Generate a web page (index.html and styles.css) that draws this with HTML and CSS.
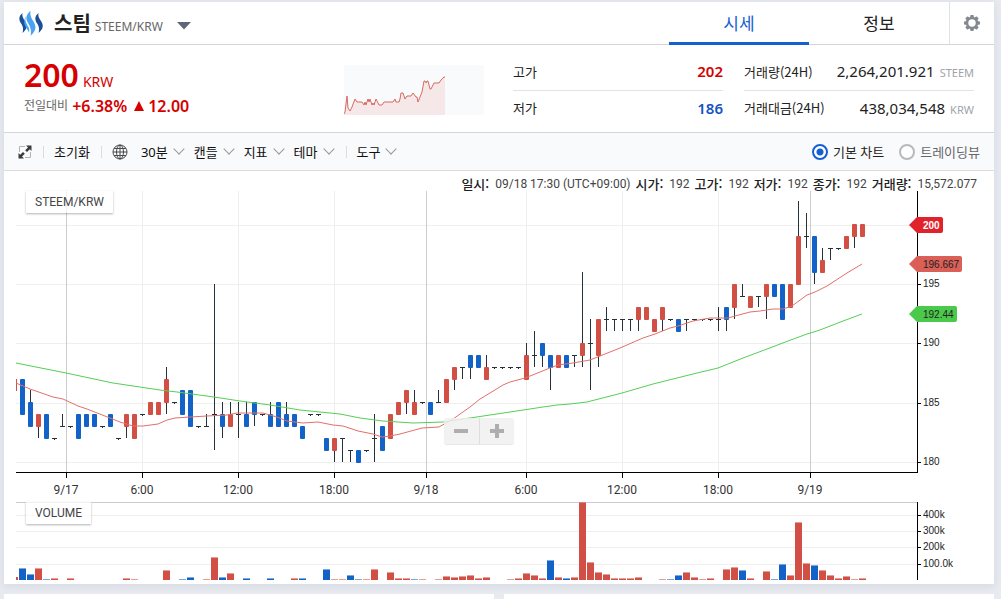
FILE: index.html
```
<!DOCTYPE html>
<html lang="ko">
<head>
<meta charset="utf-8">
<title>스팀 STEEM/KRW</title>
<link rel="stylesheet" href="styles.css">
</head>
<body>
<main class="card">
  <header class="head">
    <button class="coin" type="button">
      <svg class="coin-logo" width="26" height="26" viewBox="0 0 26 26" aria-hidden="true">
        <path fill="#1a5099" d="M4.500 3C.8 6 .6 9.500 2.800 13C4.800 16 5.800 18.500 4.500 23C9.300 19 9.800 15.500 7.300 11.500C4.800 8 3.800 6 4.500 3Z"/>
        <path fill="#4ba2f2" d="M12.500 1C8 4.500 7.200 8.500 10 13C12.500 17 13.800 20.500 12.500 25.800C18.200 21 18.500 16.500 15.800 12C12.800 7.500 11.800 5 12.500 1Z"/>
        <path fill="#4ba2f2" d="M8.300 6C6.500 9.500 7.500 12.500 9.500 15.500C11.300 18 11.500 20 11 22.500C9 18 6.500 16 6.300 12.500C6.200 9.500 6.800 7.500 8.300 6Z"/>
        <path fill="#1a5099" d="M20.500 3C16.800 6 16.600 9.500 18.800 13C20.800 16 21.800 18.500 20.500 23C25.300 19 25.800 15.500 23.300 11.500C20.800 8 19.800 6 20.500 3Z"/>
      </svg>
      <span class="coin-name">스팀</span>
      <span class="coin-pair">STEEM/KRW</span>
      <svg class="coin-caret" width="14" height="8" viewBox="0 0 14 8" aria-hidden="true"><path fill="#5f6777" d="M0 0H14L7 7.500Z"/></svg>
    </button>
    <nav class="tabs">
      <a class="tab tab-on" href="#price">시세</a>
      <a class="tab" href="#info">정보</a>
    </nav>
    <button class="settings" type="button" aria-label="설정">
      <svg width="18" height="18" viewBox="0 0 18 18" aria-hidden="true">
        <g fill="#84888f"><rect x="7.200" y="1" width="3.600" height="16" rx="1"/><rect x="7.200" y="1" width="3.600" height="16" rx="1" transform="rotate(45 9 9)"/><rect x="7.200" y="1" width="3.600" height="16" rx="1" transform="rotate(90 9 9)"/><rect x="7.200" y="1" width="3.600" height="16" rx="1" transform="rotate(135 9 9)"/><circle cx="9" cy="9" r="6.200"/></g>
        <circle cx="9" cy="9" r="3.700" fill="#fff"/>
      </svg>
    </button>
  </header>

  <section class="summary">
    <div class="price">
      <div class="price-now"><strong class="price-value">200</strong><span class="price-unit">KRW</span></div>
      <div class="price-change"><span class="price-label">전일대비</span><strong>+6.38%</strong><svg class="price-arrow" width="10" height="10" viewBox="0 0 10 10" aria-hidden="true"><path fill="#d60000" d="M5 0L10 10H0Z"/></svg><strong>12.00</strong></div>
    </div>
    <svg class="mini" viewBox="0 0 140 50" aria-hidden="true">
      <path id="mini-area" fill="#f6e8e8"/>
      <path id="mini-line" fill="none" stroke="#d86a63"/>
    </svg>
    <dl class="stats stats-range">
      <div class="stat"><dt>고가</dt><dd class="up">202</dd></div>
      <div class="stat"><dt>저가</dt><dd class="down">186</dd></div>
    </dl>
    <dl class="stats stats-volume">
      <div class="stat"><dt>거래량(24H)</dt><dd>2,264,201.921<small>STEEM</small></dd></div>
      <div class="stat"><dt>거래대금(24H)</dt><dd>438,034,548<small>KRW</small></dd></div>
    </dl>
  </section>

  <section class="toolbar">
    <button class="tool" type="button" aria-label="전체화면">
      <svg width="14" height="14" viewBox="0 0 14 14" aria-hidden="true"><path fill="none" stroke="#b4b4b4" d="M7 1.500H1.500V7M7 12.500H12.500V7"/><path fill="#3a3a3a" d="M13.500 .5V6L11.800 4.300L9 7.100L7.200 5.300L10 2.500L8 .5ZM.5 13.500V8L2.200 9.700L5 6.900L6.800 8.700L4 11.500L6 13.500Z"/></svg>
    </button>
    <i class="bar"></i>
    <button class="tool" type="button">초기화</button>
    <i class="bar"></i>
    <button class="tool globe" type="button" aria-label="시간대">
      <svg width="16" height="16" viewBox="0 0 16 16" fill="none" stroke="#4a4a4a" aria-hidden="true"><circle cx="8" cy="8" r="7"/><ellipse cx="8" cy="8" rx="3.500" ry="7"/><path d="M8 1V15M1 8H15M2 4.500H14M2 11.500H14"/></svg>
    </button>
    <div class="menus">
      <button class="tool menu" type="button">30분</button>
      <button class="tool menu" type="button">캔들</button>
      <button class="tool menu" type="button">지표</button>
      <button class="tool menu" type="button">테마</button>
    </div>
    <i class="bar"></i>
    <button class="tool menu" type="button">도구</button>
    <div class="modes">
      <label class="mode mode-on"><input type="radio" name="mode" checked>기본 차트</label>
      <label class="mode"><input type="radio" name="mode">트레이딩뷰</label>
    </div>
  </section>

  <section class="chart">
    <div class="legend">
      <b>일시:</b><span>09/18 17:30 (UTC+09:00)</span>
      <b>시가:</b><span>192</span>
      <b>고가:</b><span>192</span>
      <b>저가:</b><span>192</span>
      <b>종가:</b><span>192</span>
      <b>거래량:</b><span>15,572.077</span>
    </div>
    <div class="panel">
      <svg class="plot" id="price-plot" viewBox="4 191 990 311"></svg>
      <span class="panel-name">STEEM/KRW</span>
      <div class="zoom">
        <button type="button" aria-label="축소"><svg width="14" height="14" viewBox="0 0 14 14"><path fill="#aeaeae" d="M0 5H14V9H0Z"/></svg></button>
        <button type="button" aria-label="확대"><svg width="14" height="14" viewBox="0 0 14 14"><path fill="#aeaeae" d="M0 5H5V0H9V5H14V9H9V14H5V9H0Z"/></svg></button>
      </div>
    </div>
    <div class="panel">
      <svg class="plot" id="volume-plot" viewBox="4 502 990 82"></svg>
      <span class="panel-name">VOLUME</span>
    </div>
  </section>
</main>
<div class="next">
  <div class="next-card"></div>
  <div class="next-card"></div>
</div>
<script src="chart.js"></script>
</body>
</html>
```
FILE: styles.css
```
* { box-sizing: border-box; }
html { height: 100%; overflow: hidden; }
body {
  margin: 0;
  height: 100%;
  padding: 2px 7px 0 4px;
  overflow: hidden;
  display: flex;
  flex-direction: column;
  gap: 10px;
  background: #e7eaef;
  color: #222;
  font-family: "Noto Sans", "Noto Sans CJK KR", sans-serif;
  font-size: 13px;
}
button { margin: 0; padding: 0; border: 0; background: none; font: inherit; color: inherit; cursor: pointer; }
svg { display: block; flex: none; }
dl, dd { margin: 0; }

.card { flex: none; background: #fff; box-shadow: 0 2px 8px rgba(60, 80, 110, .1); }

.head { display: flex; height: 43px; border-bottom: 1px solid #d3d5db; }
.coin { display: flex; align-items: center; margin-right: auto; padding-left: 14px; }
.coin-name { margin-left: 10px; font: bold 20px/30px "Noto Sans CJK KR", sans-serif; }
.coin-pair { margin: 6px 14px 0 4px; font-size: 12px; color: #666; }
.coin-caret { margin-top: 6px; }
.tabs { display: flex; }
.tab { width: 140px; height: 43px; text-align: center; font: 400 17px/42px "Noto Sans CJK KR", sans-serif; color: #222; text-decoration: none; }
.tab-on { color: #1560d0; border-bottom: 3px solid #1560d0; }
.settings { display: flex; align-items: center; justify-content: center; width: 45px; border-left: 1px solid #dfe1e6; }

.summary {
  display: grid;
  grid-template-columns: 1fr 140px 239px 251px;
  align-items: start;
  height: 88px;
  padding: 0 20px;
  border-bottom: 1px solid #d3d5db;
}
.price { color: #d60000; }
.price-now { display: flex; align-items: baseline; gap: 4px; line-height: 40px; height: 50px; padding-top: 10px; }
.price-value { font-size: 32px; font-weight: 600; }
.price-unit { font-size: 14px; }
.price-change { display: flex; align-items: center; gap: 4px; line-height: 22px; font-size: 16px; }
.price-change strong { font-weight: 600; }
.price-label { font-size: 12px; color: #666; }
.price-arrow { margin-left: 3px; }
.mini { width: 140px; height: 50px; margin-top: 20px; background: #f9fafc; }
.stats { margin-top: 9px; }
.stats-range { margin-left: 29px; }
.stats-volume { margin-left: 21px; }
.stat { display: flex; align-items: center; justify-content: space-between; height: 36px; padding-bottom: 2px; }
.stat + .stat { border-top: 1px solid #e1e3e9; }
.stat dt { font-family: "Noto Sans CJK KR", sans-serif; font-size: 13px; }
.stat dd { font-size: 15px; }
.stat small { margin-left: 5px; font-size: 11px; color: #a0a3a9; }
.stat .up { color: #d60000; font-weight: 600; }
.stat .down { color: #1353c0; font-weight: 600; }

.toolbar { display: flex; align-items: center; height: 38px; padding: 0 14px; background: #f9fafc; border-bottom: 1px solid #ddd; }
.tool { display: flex; align-items: center; color: #111; }
.bar { width: 1px; height: 12px; margin: 0 10px 0 11px; background: #d9dbe0; }
.globe { margin-right: 13px; }
.menus { display: flex; gap: 9px; }
.menu { gap: 6px; }
.menu::after { content: ""; width: 7px; height: 7px; margin: 0 2px 5px 1px; border: solid #999; border-width: 0 1px 1px 0; transform: rotate(45deg); }
.modes { display: flex; gap: 15px; margin-left: auto; }
.mode { display: flex; align-items: center; gap: 5px; color: #666; line-height: 16px; }
.mode-on { color: #222; }
.mode input { appearance: none; width: 16px; height: 16px; margin: 0; border: 2px solid #b9b9b9; border-radius: 50%; background: #fff; }
.mode input:checked { border-color: #1560d0; background: radial-gradient(circle, #1560d0 3px, #fff 4px); }

.legend { display: flex; justify-content: flex-end; height: 20px; padding: 4px 17px 0 0; line-height: 18px; font-size: 12px; font-family: Roboto, sans-serif; color: #444; white-space: nowrap; }
.legend b { margin: 0 6px 0 5px; font: 500 13px/18px "Noto Sans CJK KR", sans-serif; color: #222; }
.panel { position: relative; }
.plot { width: 100%; height: auto; }
.panel-name { position: absolute; top: 0; left: 22px; padding: 0 9px; font: 12px/22px Roboto, sans-serif; color: #444; background: rgba(255, 255, 255, .7); box-shadow: 0 1px 2px rgba(0, 0, 0, .3); }
.zoom { position: absolute; top: 73%; left: 440px; display: flex; width: 70px; height: 26px; border-radius: 3px; background: rgba(240, 240, 240, .85); box-shadow: 0 1px 1px rgba(0, 0, 0, .1); }
.zoom button { flex: 1; display: flex; align-items: center; justify-content: center; }
.zoom button + button { border-left: 1px solid #ddd; }

.grid { fill: #efefef; }
.grid-day { fill: #ccc; }
.axis { fill: #000; }
.wick { fill: #263238; }
.rise { fill: #d24f45; }
.fall { fill: #1262c8; }
.faded { opacity: .55; }
.ma-fast { fill: none; stroke: #e0716a; }
.ma-slow { fill: none; stroke: #55cf55; }
.x-text { font: 12px Roboto, sans-serif; fill: #333; text-anchor: middle; }
.y-text { font: 10px "Liberation Sans", sans-serif; fill: #222; }
.tag-now { fill: #e2222b; }
.tag-fast { fill: #d95f57; }
.tag-slow { fill: #4bc94b; }
.y-text-now { fill: #fff; font-weight: bold; }

.next { display: flex; flex: 1; gap: 10px; }
.next-card { flex: 1; background: #fff; }
```
FILE: chart.js
```
const NS = "http://www.w3.org/2000/svg";
const pricePlot = document.getElementById("price-plot");
const volumePlot = document.getElementById("volume-plot");

function add(parent, name, attrs, text) {
  const el = document.createElementNS(NS, name);
  for (const key in attrs) el.setAttribute(key, attrs[key]);
  if (text) el.textContent = text;
  parent.appendChild(el);
  return el;
}
function box(parent, cls, x, y, width, height, rx = 0) {
  add(parent, "rect", { class: cls, x, y, width, height, rx });
}

const left = 16, right = 917, priceBase = 472, volumeBase = 580;
const candleX = i => 22 + 8 * i;
const priceY = p => Math.round(461.6 - (p - 180) * 11.86);

// Each candle: kind (R rise, B fall, D flat), body top, body bottom, high, low.
const candles = `B187,184 B185,183,186 R184,183,,182 B184,182 D182 D183,,184 D183 B184,182 B184,183 B184,183
D183 B184,183 D182 R184,183,,182 R184,182 D184 R185,184 R185,184 R187,185,188,184 D185
B186,184 B186,183 D183 D183,,184 D184,,195,181 B184,183,185,182 R184,183,185 D184,,185,182 B184,183,185 B185,184,,183
D184 B184,183,185 B185,183 B184,183,185 B184,183 B183,182 D184 D184 B182,181 R182,181,,180
D182,,,180 D181,,,180 B181,180 D181 D182,,184,180 B183,181 R184,182 R185,184 R186,185,,184 R185,184,186
D185 B185,184 D185,,186 R187,185 R188,187,,186 D188,,,187 B189,188,,187 B189,188 R188,187,189 D188
D188 D188 D188 R189,187,190 D189,,191,188 B190,189,,188 B189,188,,186 R189,188 B189,188 D189,,,188
R190,189,196,188 D190,,192,186 R192,189,,188 D192,,193,191 D192,,,191 D192,,,191 D192,,,191 R193,192,,191 R193,192 R192,191
R193,192,,191 D192 B192,191 D192,,,191 D192 D192 D192 D192,,193,191 B193,192,,191 R195,193,,192
D194,,195 R194,193 D194,,,193 R195,194,,192 B195,194 B195,192 R195,193 R199,195,202 D199,,201,198 B199,196,,195
R197,196,198 D198,,,197 D198 R199,198 R200,199,,198 R200,199`.split(/\s+/);

// Volume bars: candle index, kind, height.
const volumes = `0B12 1B6 2R12 3B1 4R2 6R2 13R2 14R1 18R10 20B1 21B3 23R1 24R23 25B3 26R7 28B2 31B2 34R2 35B2
38B11 39R1 40R1 41B5 42B1 43R1 44R11 46R8 47R2 48R2 49B1 50R1 52R1 53R4 54R3 55R4 56R5 57R2 58R3
61R1 62R2 63R7 64R5 65R2 66B20 67R3 68B2 69R3 70R78 71R18 72R8 73R6 74R2 75R2 76R2 77R3 80R1 81B1 82B5
83R8 84R3 85R1 86R2 88R11 89R13 90B10 91R2 93R9 94B1 95B16 96R5 97R58 98R17 99B15 100R10 101R5 102R2 103R4 104R1 105R2`.split(/\s+/);

const fast = "16,383 30,389 53,397 63,399 78,406 87,409 110,418 120,422 133,426 143,426 158,424 167,420 175,418 190,417 207,416 227,415 237,413 263,413 277,417 287,421 303,423 318,422 333,425 343,426 358,431 373,434 382,437 390,436 400,434 422,428 439,427 453,419 470,407 480,399 490,393 503,385 510,382 525,378 550,368 558,365 573,363 590,360 620,348 643,338 655,334 670,328 678,326 693,321 710,318 728,318 735,316 750,312 760,311 773,309 783,309 792,306 807,295 815,292 827,286 847,273 862,264";
const slow = "16,363 66,373 113,383 160,390 177,392 214,397 240,401 270,405 300,410 340,414 360,418 383,421 413,423 443,422 470,418 490,415 510,412 543,407 557,405 570,404 587,402 622,393 653,384 693,374 718,368 743,358 767,349 788,341 807,334 820,330 843,321 862,314";

for (const [y, label] of [[225, ""], [284, "195"], [343, "190"], [403, "185"], [462, "180"]]) {
  box(pricePlot, "grid", left, y, right - left, 1);
  if (label) {
    box(pricePlot, "axis", right, y, 4, 1);
    add(pricePlot, "text", { class: "y-text", x: 923, y: y + 3 }, label);
  }
}
for (const [x, label, day] of [[66, "9/17", 1], [142, "6:00"], [238, "12:00"], [334, "18:00"], [426, "9/18", 1], [526, "6:00"], [622, "12:00"], [718, "18:00"], [810, "9/19", 1]]) {
  box(pricePlot, day ? "grid-day" : "grid", x, 191, 1, priceBase - 191);
  box(pricePlot, "axis", x, priceBase, 1, 6);
  add(pricePlot, "text", { class: "x-text", x, y: 494 }, label);
}
box(pricePlot, "axis", left, priceBase, right - left + 1, 1);
box(pricePlot, "axis", right, 191, 1, priceBase - 191);

box(pricePlot, "rise", left, 379, 1, 12);
candles.forEach((item, i) => {
  const [top, bottom, high, low] = item.slice(1).split(",").map(Number);
  const end = bottom || top;
  const x = candleX(i);
  const y1 = priceY(high || top), y2 = priceY(low || end);
  box(pricePlot, "wick", x, y1, 1, Math.max(2, y2 - y1));
  if (item[0] === "D") box(pricePlot, "wick", x - 2, priceY(top), 5, 1);
  else box(pricePlot, item[0] === "R" ? "rise" : "fall", x - 2, priceY(top), 5, priceY(end) - priceY(top) + 1, 1);
});
add(pricePlot, "polyline", { class: "ma-slow", points: slow });
add(pricePlot, "polyline", { class: "ma-fast", points: fast });

for (const [y, end, label, kind] of [[225, 943, "200", "now"], [264, 962, "196.667", "fast"], [314, 957, "192.44", "slow"]]) {
  add(pricePlot, "path", { class: "tag-" + kind, d: `M909 ${y}L917 ${y - 8}H${end - 2}Q${end} ${y - 8} ${end} ${y - 6}V${y + 6}Q${end} ${y + 8} ${end - 2} ${y + 8}H917Z` });
  add(pricePlot, "text", { class: "y-text y-text-" + kind, x: 923, y: y + 4 }, label);
}

for (const [y, label] of [[515, "400k"], [531, "300k"], [547, "200k"], [564, "100.0k"]]) {
  box(volumePlot, "grid", left, y, right - left, 1);
  box(volumePlot, "axis", right, y, 4, 1);
  add(volumePlot, "text", { class: "y-text", x: 923, y: y + 3 }, label);
}
box(volumePlot, "grid-day", left, 502, right - left, 1);
box(volumePlot, "axis", right, 502, 1, volumeBase - 502);
box(volumePlot, "rise", left, volumeBase - 3, 2, 3);
for (const item of volumes) {
  const [, i, kind, h] = item.match(/(\d+)([RB])(\d+)/);
  const cls = kind === "R" ? "rise" : "fall";
  const x = candleX(+i) - 3, y = volumeBase - h;
  box(volumePlot, cls + " faded", x, y, 7, 1);
  box(volumePlot, cls, x, y + 1, 7, h - 1);
}

const mini = [[0,49],[1,47],[3,31],[4,43],[6,46],[8,42],[11,34],[13,37],[18,37],[20,40],[21,37],[22,40],[24,34],[25,37],[26,34],[28,40],[29,38],[30,40],[32,34],[35,40],[38,40],[40,37],[49,37],[51,34],[52,37],[55,37],[56,34],[57,28],[59,28],[61,34],[63,31],[67,31],[69,28],[72,32],[73,32],[74,37],[76,32],[78,27],[80,16],[81,16],[82,18],[83,16],[84,16],[86,24],[87,24],[90,18],[95,18],[97,15],[100,12],[101,12]];
const line = "M" + mini.map(p => p.join(" ")).join("L");
document.getElementById("mini-line").setAttribute("d", line);
document.getElementById("mini-area").setAttribute("d", line + "V50H0Z");
```
